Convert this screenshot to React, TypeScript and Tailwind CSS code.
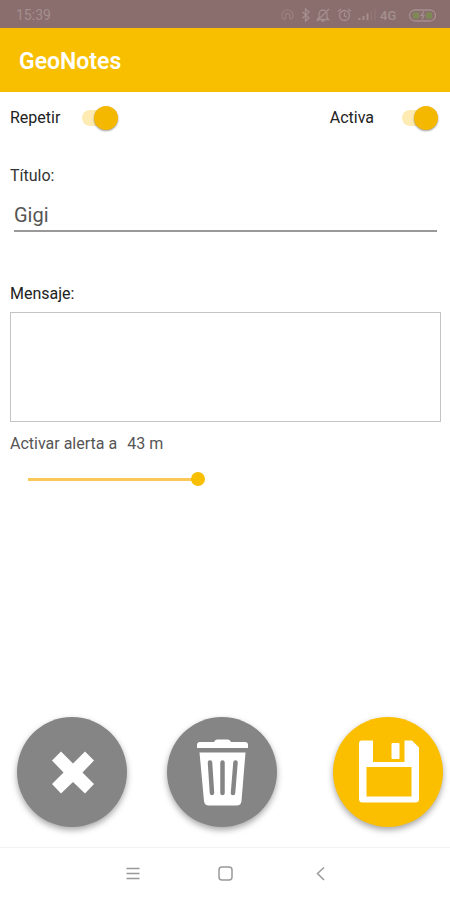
import { useState } from "react";
import type { ReactNode } from "react";

function StatusBar() {
  return (
    <div className="flex h-7 items-center justify-between bg-[#896e6d] pr-3 pl-4 pt-px text-[#a58e8e]">
      <span className="text-sm">15:39</span>
      <svg
        width="158"
        height="16"
        viewBox="0 0 158 16"
        fill="none"
        stroke="currentColor"
        strokeWidth="1.3"
        aria-hidden="true"
      >
        {/* headset */}
        <g opacity="0.6">
          <path d="M3 11.5A5.5 5.5 0 1 1 12 11.5" />
          <path d="M5.5 12V8.5a2.200 2.200 0 0 1 4.400 0V12M3 12h2.500M9.900 12H12" />
        </g>
        {/* bluetooth */}
        <path d="M22.500 5l6.500 6-3.500 3V2l3.500 3-6.500 6" />
        {/* muted bell */}
        <path d="M37.500 12.500h11l-1.500-2V7a4 4 0 0 0-8 0v3.500zM41.500 14h3M49 2L37 14" />
        {/* alarm */}
        <circle cx="64.500" cy="8.500" r="5" />
        <path d="M64.500 5.500v3.500l2.500 1M58 4.500l3-2.500M71 4.500L68 2" />
        {/* signal */}
        <path d="M79.500 11v2M83.500 9v4M87.500 6.500V13" strokeWidth="2" />
        <path d="M91.500 4v9M95 2v11" strokeWidth="1" opacity="0.4" />
        <text
          x="100"
          y="13"
          fill="currentColor"
          stroke="none"
          fontSize="13"
          fontWeight="500"
        >
          4G
        </text>
        {/* charging battery */}
        <rect x="129.500" y="3" width="26" height="11" rx="5.500" />
        <path d="M133 8.500h6M146 8.500h6" stroke="#7d8a55" strokeWidth="6" />
        <path d="M144 4.500l-3 4h3l-2 4" />
      </svg>
    </div>
  );
}

function Toggle({
  id,
  label,
  className,
  checked,
  onChange,
}: {
  id: string;
  label: string;
  className: string;
  checked: boolean;
  onChange: (value: boolean) => void;
}) {
  return (
    <div className={`flex items-center ${className}`}>
      <label htmlFor={id} className="text-base leading-6 text-[#222]">
        {label}
      </label>
      <input
        id={id}
        type="checkbox"
        role="switch"
        checked={checked}
        onChange={(e) => onChange(e.target.checked)}
        className="flex h-4 w-9 cursor-pointer appearance-none items-center rounded-full bg-gray-300 after:size-6 after:shrink-0 after:rounded-full after:bg-white after:shadow-[0_1px_2px_rgba(0,0,0,0.4)] checked:justify-end checked:bg-[#fdebb3] checked:after:bg-[#f5b800]"
      />
    </div>
  );
}

function RoundButton({
  label,
  className,
  children,
}: {
  label: string;
  className: string;
  children: ReactNode;
}) {
  return (
    <button
      type="button"
      aria-label={label}
      className={`size-[110px] cursor-pointer rounded-full shadow-[0_3px_6px_rgba(0,0,0,0.35)] ${className}`}
    >
      <svg viewBox="0 0 110 110" className="size-full" aria-hidden="true">
        {children}
      </svg>
    </button>
  );
}

export default function App() {
  const [repeat, setRepeat] = useState(true);
  const [active, setActive] = useState(true);
  const [title, setTitle] = useState("Gigi");
  const [message, setMessage] = useState("");
  const [distance, setDistance] = useState(43);

  return (
    <div className="flex min-h-screen flex-col bg-white font-['Roboto',sans-serif]">
      <StatusBar />

      <header className="flex h-16 items-center bg-[#f7bf00] px-[19px] pt-1">
        <h1 className="text-[23px] font-semibold text-white">GeoNotes</h1>
      </header>

      <main className="flex flex-1 flex-col">
        <div className="flex items-center justify-between pt-[14px] pr-3 pl-[10px]">
          <Toggle
            id="repeat"
            label="Repetir"
            className="gap-[22px]"
            checked={repeat}
            onChange={setRepeat}
          />
          <Toggle
            id="active"
            label="Activa"
            className="gap-7"
            checked={active}
            onChange={setActive}
          />
        </div>

        <div className="flex flex-col pt-[34px] pr-[9px] pl-[10px]">
          <label htmlFor="title" className="text-base leading-6 text-[#333]">
            Título:
          </label>
          <input
            id="title"
            type="text"
            value={title}
            onChange={(e) => setTitle(e.target.value)}
            className="mx-1 mt-3 h-8 border-b-2 border-[#999] bg-transparent text-xl text-[#555] outline-none"
          />
        </div>

        <div className="flex flex-col pt-[50px] pr-[9px] pl-[10px]">
          <label htmlFor="message" className="text-base leading-6 text-[#222]">
            Mensaje:
          </label>
          <textarea
            id="message"
            value={message}
            onChange={(e) => setMessage(e.target.value)}
            className="mt-[6px] h-[110px] resize-none border border-[#c4c4c4] p-2 text-base text-[#555] outline-none"
          />
        </div>

        <div className="flex flex-col pt-[10px]">
          <label
            htmlFor="distance"
            className="flex gap-[10px] px-[10px] text-base leading-6 text-[#555]"
          >
            <span>Activar alerta a</span>
            <span>{distance} m</span>
          </label>
          <div className="flex px-7 pt-4">
            <input
              id="distance"
              type="range"
              min={0}
              max={100}
              value={distance}
              onChange={(e) => setDistance(Number(e.target.value))}
              className="h-[14px] w-full cursor-pointer appearance-none bg-[linear-gradient(#f9c857,#f9c857)] bg-left bg-no-repeat [&::-webkit-slider-thumb]:size-[14px] [&::-webkit-slider-thumb]:appearance-none [&::-webkit-slider-thumb]:rounded-full [&::-webkit-slider-thumb]:bg-[#f7bf00]"
              style={{ backgroundSize: `${distance}% 3px` }}
            />
          </div>
        </div>

        <div className="mt-auto flex items-center justify-between pt-6 pr-[7px] pb-5 pl-[17px]">
          <div className="flex gap-10">
            <RoundButton label="Cancelar" className="bg-[#858585]">
              <path
                d="M44 34.500L56 46.500 68 34.500 77 43.500 65.500 55.500 77 67 68 76.500 56 65 44 76.500 35 67 46.500 55.500 35 43.500Z"
                fill="#fff"
              />
            </RoundButton>
            <RoundButton label="Eliminar" className="bg-[#858585]">
              <path
                d="M30 31V28Q30 25 33 25H47Q48 22.500 50 22.500H61Q63 22.500 64 25H78Q81 25 81 28V31ZM32.500 35.500H78.500L74.500 84Q74 88.500 69.500 88.500H42Q37.500 88.500 37 84Z"
                fill="#fff"
              />
              <path
                d="M43 45.500L45 76M55.500 45.500V76M68.500 45.500L66 76"
                fill="none"
                stroke="#858585"
                strokeWidth="4.500"
                strokeLinecap="round"
              />
            </RoundButton>
          </div>
          <RoundButton label="Guardar" className="bg-[#fbbf00]">
            <path
              fillRule="evenodd"
              d="M29 23.500H40V45H71.500V23.500H79L86 30.500V82Q86 85.500 82.500 85.500H29.500Q26 85.500 26 82V26.500Q26 23.500 29 23.500ZM33.500 50V79.500H78.500V50Z"
              fill="#fff"
            />
            <rect x="58.500" y="26" width="8" height="16" rx="1" fill="#fff" />
          </RoundButton>
        </div>
      </main>

      <nav className="flex h-[53px] items-center justify-center gap-[70px] border-t border-[#f3f3f3] text-[#999]">
        <button type="button" aria-label="Recientes" className="cursor-pointer">
          <svg width="24" height="24" viewBox="0 0 24 24" fill="none" stroke="currentColor" strokeWidth="1.5">
            <path d="M7.500 6.500h13M7.500 11.500h13M7.500 16.500h13" />
          </svg>
        </button>
        <button type="button" aria-label="Inicio" className="cursor-pointer">
          <svg width="24" height="24" viewBox="0 0 24 24" fill="none" stroke="currentColor" strokeWidth="1.5">
            <rect x="6" y="5" width="13" height="13" rx="3" />
          </svg>
        </button>
        <button type="button" aria-label="Atrás" className="cursor-pointer">
          <svg width="24" height="24" viewBox="0 0 24 24" fill="none" stroke="currentColor" strokeWidth="1.5">
            <path d="M17 5.500l-6.500 6 6.500 6.500" />
          </svg>
        </button>
      </nav>
    </div>
  );
}
